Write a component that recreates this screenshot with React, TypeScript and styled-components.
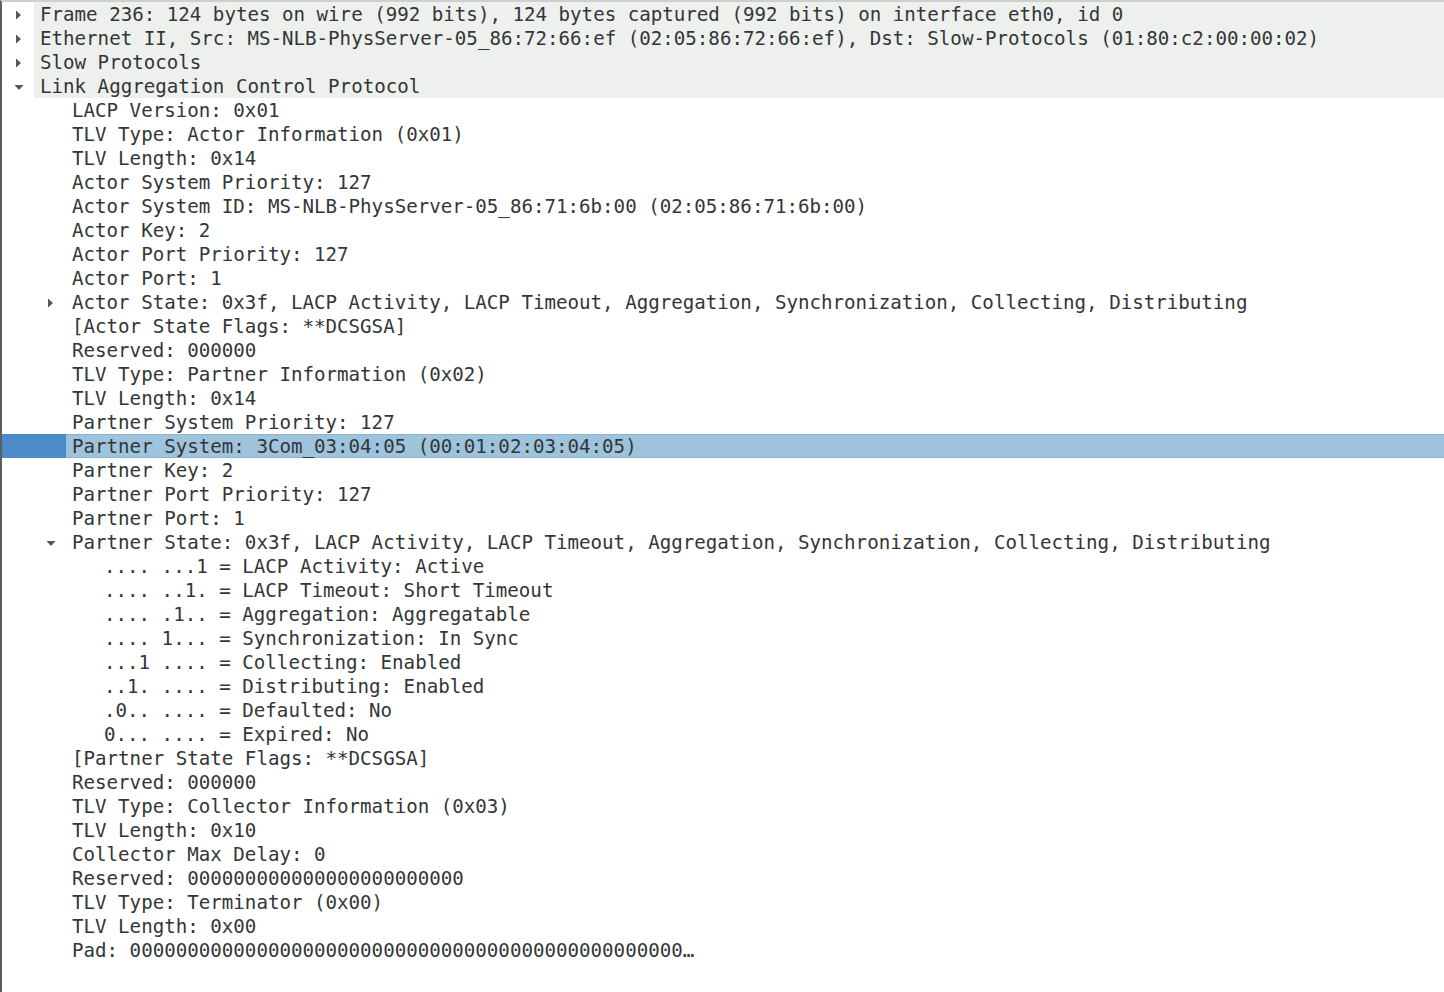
import styled, { createGlobalStyle } from "styled-components";

const GlobalStyle = createGlobalStyle`
  html, body {
    margin: 0;
    padding: 0;
    background: #ffffff;
  }
`;

const Tree = styled.div`
  width: 1444px;
  height: 992px;
  box-sizing: border-box;
  border-top: 2px solid #cfcfcf;
  border-left: 2px solid #5e5e5e;
  background: #ffffff;
  overflow: hidden;

  font-family: "DejaVu Sans Mono", "Liberation Mono", monospace;
  font-size: 19.15px;
  color: #333637;
`;

const Row = styled.div<{ $selected?: boolean }>`
  height: 24px;
  display: flex;
  flex-direction: row;
  align-items: stretch;
  background-color: ${(p) => (p.$selected ? "#4a8bc8" : "transparent")};
`;

const Indent = styled.div<{ $level: number }>`
  width: ${(p) => p.$level * 32}px;
  flex-shrink: 0;
`;

const Toggle = styled.div`
  width: 32px;
  flex-shrink: 0;
  display: flex;
  justify-content: center;
  align-items: center;
  padding: 2px 0 0 1px;
  box-sizing: border-box;
`;

// selected row gets the light blue cell with a thin darker edge
const Label = styled.div<{ $band?: boolean; $selected?: boolean }>`
  flex: 1;
  height: 24px;
  padding-left: 6px;
  padding-top: ${(p) => (p.$selected ? "1px" : "2px")};
  line-height: 22px;
  white-space: pre;
  box-sizing: border-box;
  background-color: ${(p) =>
    p.$selected ? "#9ec3dc" : p.$band ? "#edf0ed" : "transparent"};
  border-top: ${(p) => (p.$selected ? "1px solid #8fb4cf" : "none")};
  border-bottom: ${(p) => (p.$selected ? "1px solid #8fb4cf" : "none")};
`;

const Arrow = ({ open }: { open: boolean }) =>
  open ? (
    <svg width="12" height="9" viewBox="0 0 12 9">
      <path d="M1.5 2 L10.5 2 L6 7 Z" fill="#555" />
    </svg>
  ) : (
    <svg width="9" height="12" viewBox="0 0 9 12">
      <path d="M2 1.5 L7 6 L2 10.5 Z" fill="#555" />
    </svg>
  );

type Node = {
  text: string;
  level: number;
  toggle?: "open" | "closed";
  band?: boolean;
  selected?: boolean;
};

const zeros = (n: number) => "0".repeat(n);

const rows: Node[] = [
  { text: "Frame 236: 124 bytes on wire (992 bits), 124 bytes captured (992 bits) on interface eth0, id 0", level: 0, toggle: "closed", band: true },
  { text: "Ethernet II, Src: MS-NLB-PhysServer-05_86:72:66:ef (02:05:86:72:66:ef), Dst: Slow-Protocols (01:80:c2:00:00:02)", level: 0, toggle: "closed", band: true },
  { text: "Slow Protocols", level: 0, toggle: "closed", band: true },
  { text: "Link Aggregation Control Protocol", level: 0, toggle: "open", band: true },
  { text: "LACP Version: 0x01", level: 1 },
  { text: "TLV Type: Actor Information (0x01)", level: 1 },
  { text: "TLV Length: 0x14", level: 1 },
  { text: "Actor System Priority: 127", level: 1 },
  { text: "Actor System ID: MS-NLB-PhysServer-05_86:71:6b:00 (02:05:86:71:6b:00)", level: 1 },
  { text: "Actor Key: 2", level: 1 },
  { text: "Actor Port Priority: 127", level: 1 },
  { text: "Actor Port: 1", level: 1 },
  { text: "Actor State: 0x3f, LACP Activity, LACP Timeout, Aggregation, Synchronization, Collecting, Distributing", level: 1, toggle: "closed" },
  { text: "[Actor State Flags: **DCSGSA]", level: 1 },
  { text: "Reserved: 000000", level: 1 },
  { text: "TLV Type: Partner Information (0x02)", level: 1 },
  { text: "TLV Length: 0x14", level: 1 },
  { text: "Partner System Priority: 127", level: 1 },
  { text: "Partner System: 3Com_03:04:05 (00:01:02:03:04:05)", level: 1, selected: true },
  { text: "Partner Key: 2", level: 1 },
  { text: "Partner Port Priority: 127", level: 1 },
  { text: "Partner Port: 1", level: 1 },
  { text: "Partner State: 0x3f, LACP Activity, LACP Timeout, Aggregation, Synchronization, Collecting, Distributing", level: 1, toggle: "open" },
  { text: ".... ...1 = LACP Activity: Active", level: 2 },
  { text: ".... ..1. = LACP Timeout: Short Timeout", level: 2 },
  { text: ".... .1.. = Aggregation: Aggregatable", level: 2 },
  { text: ".... 1... = Synchronization: In Sync", level: 2 },
  { text: "...1 .... = Collecting: Enabled", level: 2 },
  { text: "..1. .... = Distributing: Enabled", level: 2 },
  { text: ".0.. .... = Defaulted: No", level: 2 },
  { text: "0... .... = Expired: No", level: 2 },
  { text: "[Partner State Flags: **DCSGSA]", level: 1 },
  { text: "Reserved: 000000", level: 1 },
  { text: "TLV Type: Collector Information (0x03)", level: 1 },
  { text: "TLV Length: 0x10", level: 1 },
  { text: "Collector Max Delay: 0", level: 1 },
  { text: "Reserved: " + zeros(24), level: 1 },
  { text: "TLV Type: Terminator (0x00)", level: 1 },
  { text: "TLV Length: 0x00", level: 1 },
  { text: "Pad: " + zeros(48) + "\u2026", level: 1 },
];

const App = () => {
  return (
    <>
      <GlobalStyle />
      <Tree>
        {rows.map((r, i) => (
          <Row key={i} $selected={r.selected}>
            <Indent $level={r.level} />
            <Toggle>{r.toggle && <Arrow open={r.toggle === "open"} />}</Toggle>
            <Label $band={r.band} $selected={r.selected}>
              {r.text}
            </Label>
          </Row>
        ))}
      </Tree>
    </>
  );
};

export default App;
